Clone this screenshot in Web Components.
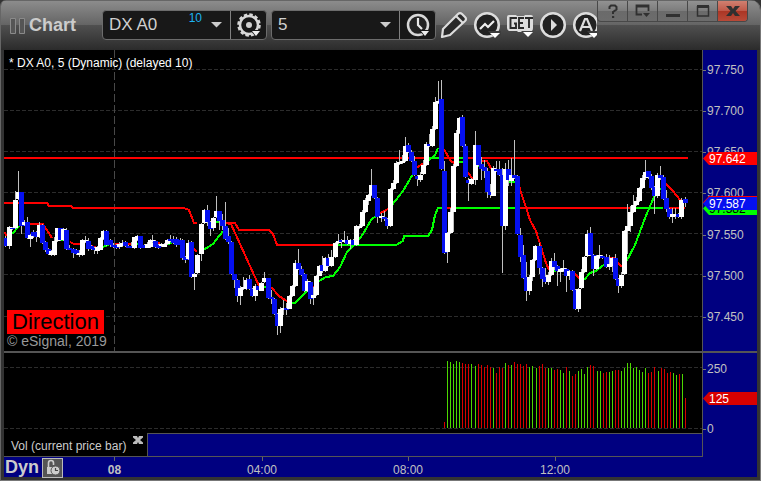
<!DOCTYPE html>
<html lang="en">
<head>
<meta charset="utf-8">
<title>Chart</title>
<style>
  html, body {
    height: 100%;
    margin: 0;
    background: #333;
  }
  body {
    font: 12px/15px "Liberation Sans", Arial, sans-serif;
    color: #c0c0c0;
  }
</style>
</head>
<body>
<chart-window>
  <tool-bar slot="toolbar"></tool-bar>
  <price-pane></price-pane>
  <volume-pane></volume-pane>
  <study-tabs></study-tabs>
  <time-axis></time-axis>
</chart-window>

<script>
class ChartWindow extends HTMLElement {
  constructor() {
    super();
    this.attachShadow({mode: 'open'}).innerHTML = `
      <style>
        :host {
          display: flex;
          flex-direction: column;
          box-sizing: border-box;
          height: 100vh;
          min-height: 320px;
          border-left: 1px solid #666;
          border-right: 1px solid #777;
          border-bottom: 1px solid #777;
          border-radius: 6px 10px 0 0;
          overflow: hidden;
          background: #333;
        }
        main {
          flex: 1;
          display: flex;
          flex-direction: column;
          min-height: 0;
          margin: 0 3px 3px;
          background: #000080;
        }
      </style>
      <slot name="toolbar"></slot>
      <main><slot></slot></main>
    `;
  }
}

class IconButton extends HTMLElement {
  constructor() {
    super();
    this.attachShadow({mode: 'open'}).innerHTML = `
      <style>
        :host { display: flex; flex: none; }
        button {
          display: flex;
          align-items: center;
          justify-content: center;
          width: 100%;
          padding: 0;
          border: 0;
          background: none;
          color: inherit;
        }
      </style>
      <button type="button" aria-label="${this.getAttribute('label')}"><slot></slot></button>
    `;
  }
}

class SymbolField extends HTMLElement {
  constructor() {
    super();
    this.attachShadow({mode: 'open'}).innerHTML = `
      <style>
        :host {
          display: flex;
          flex: none;
          box-sizing: border-box;
          width: 165px;
          height: 30px;
          border: 1px solid #6c6c6c;
          border-radius: 4px;
          background: #181818;
        }
        label {
          display: flex;
          align-items: center;
          flex: 1;
          min-width: 0;
          padding: 0 8px 0 6px;
          border-right: 1px solid #808080;
        }
        input, select {
          flex: 1;
          min-width: 0;
          height: 28px;
          padding: 0;
          border: 0;
          outline: 0;
          appearance: none;
          background: none;
          font: 17px/28px "Liberation Sans", Arial, sans-serif;
          color: #d0d0d0;
        }
        .count {
          align-self: flex-start;
          margin-right: 9px;
          color: #1cb2f0;
        }
        ::slotted(icon-button) { width: 35px; }
      </style>
      <label>
        ${this.hasAttribute('options')
          ? `<select aria-label="Interval"><option>${this.getAttribute('options')}</option></select>`
          : `<input aria-label="Symbol" value="${this.getAttribute('value')}"><span class="count">${this.getAttribute('count')}</span>`}
        <svg width="11" height="6"><path d="M0 0h11L5.500 5.500z" fill="#ccc"/></svg>
      </label>
      <slot></slot>
    `;
  }
}

class WindowControls extends HTMLElement {
  constructor() {
    super();
    this.attachShadow({mode: 'open'}).innerHTML = `
      <style>
        :host {
          display: flex;
          flex: none;
          align-self: flex-start;
          box-sizing: border-box;
          height: 21px;
          margin-right: 12px;
          border: 1px solid #484848;
          border-top: 0;
          border-radius: 0 0 4px 4px;
          overflow: hidden;
          background: linear-gradient(#929292, #7c7c7c 50%, #6a6a6a 50%, #6c6c6c);
        }
        icon-button {
          width: 29px;
          border-right: 1px solid #484848;
          color: #303030;
        }
        icon-button:last-child {
          border-right: 0;
          background: linear-gradient(#d08070, #bf5848 50%, #ab3524 50%, #b84a38);
        }
      </style>
      <icon-button label="Help"><svg width="10" height="14" fill="none" stroke="currentColor" stroke-width="2"><path d="M1.500 5V3L3 1.500h4L8.500 3v2.500L5 8v2M4 13h2.200"/></svg></icon-button>
      <icon-button label="Window menu"><svg width="16" height="14" fill="none" stroke="currentColor"><path d="M7 10.500H1.500v-9h12V7M1 2.500h13" stroke-width="1.800"/><path d="M8 9h7l-3.500 4z" fill="currentColor" stroke="none"/></svg></icon-button>
      <icon-button label="Minimize"><svg width="14" height="14"><path d="M0 10h14v3H0z" fill="currentColor"/></svg></icon-button>
      <icon-button label="Maximize"><svg width="14" height="14" fill="none" stroke="currentColor"><path d="M1.500 2v10h11V2" stroke-width="1.500"/><path d="M1 2.500h12" stroke-width="3"/></svg></icon-button>
      <icon-button label="Close"><svg width="14" height="12"><path d="M0 1h5l2 3 2-3h5L9.500 6l4.500 5H9L7 8l-2 3H0l4.500-5z" fill="currentColor"/></svg></icon-button>
    `;
  }
}

class ToolBar extends HTMLElement {
  constructor() {
    super();
    this.attachShadow({mode: 'open'}).innerHTML = `
      <style>
        :host {
          display: flex;
          flex: none;
          align-items: center;
          box-sizing: border-box;
          height: 50px;
          border-top: 1px solid #666;
          background: linear-gradient(#8c8c8c, #646464 49%, #505050 49%, #2b2b2b);
        }
        .grip { margin-left: 9px; }
        h1 {
          margin: 0 26px 2px 3px;
          font: bold 18px/24px "Liberation Sans", Arial, sans-serif;
          color: #ccc;
        }
        symbol-field {
          margin: 0 4px 1px 0;
        }
        .tools {
          display: flex;
          flex: 1;
          gap: 5px;
          min-width: 0;
          margin-bottom: 2px;
          overflow: hidden;
        }
        .tools icon-button { width: 28px; }
      </style>
      <svg class="grip" width="16" height="16" fill="#555" stroke="#8a8a8a"><path d="M.500.500h5v15h-5zM9.500.500h5v15h-5z"/></svg>
      <h1>Chart</h1>
      <symbol-field value="DX A0" count="10">
        <icon-button label="Settings"><svg width="26" height="26" viewBox="0 0 26 26">
          <circle cx="13" cy="13" r="9" fill="none" stroke="#d8d8d8" stroke-width="2.500"/>
          <circle cx="13" cy="13" r="10.500" fill="none" stroke="#d8d8d8" stroke-width="2.500" stroke-dasharray="3.400 2.098"/>
          <circle cx="13" cy="13" r="3" fill="#d0d0d0"/>
          <path d="M14 18h12l-6 7z" fill="#181818"/><path d="M16 19h8l-4 5z" fill="#eee"/></svg></icon-button>
      </symbol-field>
      <symbol-field options="5">
        <icon-button label="Time template"><svg width="26" height="26" viewBox="0 0 26 26">
          <circle cx="13" cy="13" r="10" fill="#222" stroke="#d8d8d8" stroke-width="2.500"/>
          <path d="M13 6v7l4 4" fill="none" stroke="#e8e8e8" stroke-width="2.200"/>
          <path d="M14 18h12l-6 7z" fill="#181818"/><path d="M16 19h8l-4 5z" fill="#eee"/></svg></icon-button>
      </symbol-field>
      <div class="tools">
        <icon-button label="Draw"><svg width="28" height="28" viewBox="0 0 28 28" fill="#292929" stroke="#ddd" stroke-width="2.200" stroke-linejoin="round">
          <path d="M2 26l1-8L18 3q2-2 4 0l3 3q2 2 0 4L10 24z"/><path d="M16 5l7 7" fill="none"/></svg></icon-button>
        <icon-button label="Studies"><svg width="28" height="28" viewBox="0 0 28 28">
          <circle cx="14" cy="14" r="11.800" fill="#222" stroke="#ddd" stroke-width="2.500"/>
          <path d="M7 18l5-5 3 3 6-6" fill="none" stroke="#eee" stroke-width="2.200"/>
          <path d="M15 20h13v4l-5 4z" fill="#3c3c3c"/><path d="M17 22h10l-5 5z" fill="#fff"/></svg></icon-button>
        <icon-button label="GET studies"><svg width="28" height="28" viewBox="0 0 28 28">
          <path d="M3 4h7l1 1h7l1-1h6q2 0 2 2v11q0 2-1 3h-7l-1 1h-6l-1-1H3q-2-1-2-3V6q0-2 2-2z" fill="#ddd"/>
          <path d="M10 8V7H4.500v10H10v-4.500H8M18 7h-5v10h5M13 12h4M19 7h8M23 7v10" fill="none" stroke="#292929" stroke-width="1.900"/>
          <path d="M15 20h13l-6 7z" fill="#444"/><path d="M17 21h10l-5 5z" fill="#fff"/></svg></icon-button>
        <icon-button label="Play"><svg width="28" height="28" viewBox="0 0 28 28">
          <circle cx="14" cy="14" r="11.800" fill="#222" stroke="#ddd" stroke-width="2.500"/><path d="M12 8l6 6-6 6z" fill="#ddd"/></svg></icon-button>
        <icon-button label="Alerts"><svg width="28" height="28" viewBox="0 0 28 28">
          <circle cx="14" cy="14" r="11.800" fill="#222" stroke="#ddd" stroke-width="2.500"/>
          <path d="M8 20l5-12h2l5 12M10 16h8" fill="none" stroke="#ddd" stroke-width="2.200"/>
          <path d="M15 20h13v4l-5 4z" fill="#3c3c3c"/><path d="M17 22h10l-5 5z" fill="#fff"/></svg></icon-button>
      </div>
      <window-controls></window-controls>
    `;
  }
}

/* right hand scale: evenly spread labels, tags slotted over them */
class ValueAxis extends HTMLElement {
  constructor() {
    super();
    const labels = this.getAttribute('labels').split(' ');
    this.attachShadow({mode: 'open'}).innerHTML = `
      <style>
        :host {
          display: flex;
          flex-direction: column;
          justify-content: space-between;
          flex: none;
          position: relative;
          box-sizing: border-box;
          width: 55px;
          border-left: 1px solid #555;
        }
        span {
          display: flex;
          align-items: center;
          gap: 1px;
          height: 15px;
        }
        span::before {
          content: "";
          width: 3px;
          height: 1px;
          background: #777;
        }
      </style>
      ${labels.map(l => `<span>${l}</span>`).join('')}
      <slot></slot>
    `;
  }
}

class AxisTag extends HTMLElement {
  constructor() {
    super();
    this.attachShadow({mode: 'open'}).innerHTML = `
      <style>
        :host {
          position: absolute;
          left: 0;
          right: 0;
          height: 13px;
          padding-left: 6px;
          line-height: 14px;
          color: #fff;
          clip-path: polygon(0 50%, 6px 0, 100% 0, 100% 100%, 6px 100%);
        }
      </style>
      <slot></slot>
    `;
  }
}

// x high top bottom low, w = up bar, b = down bar
const CANDLES = `
5 236 238 246 247 b|9 226 227 246 249 w|12 227 228 229 230 b|15 191 200 228 229 w|18 171 192 199 200 w|21 192 192 226 234 b|24 220 222 225 226 w|
27 217 222 238 239 b|30 234 235 239 247 w|33 230 232 236 238 b|36 231 232 237 242 b|39 222 225 237 238 w|42 224 225 243 244 b|45 241 242 250 252 b|
48 248 249 254 255 b|51 250 251 255 256 w|54 237 241 255 256 w|57 228 228 241 242 w|60 228 228 240 241 b|63 228 229 240 241 w|66 228 230 249 250 b|
69 245 248 250 250 b|73 248 249 253 258 b|76 249 250 254 255 b|79 250 253 255 257 w|82 239 240 255 256 w|85 236 240 242 243 w|88 238 241 249 251 b|
91 245 246 249 250 b|94 247 248 250 254 b|97 246 247 251 254 w|100 237 238 250 250 w|103 230 231 239 240 w|106 230 231 245 246 b|110 239 240 245 247 b|
113 243 245 247 248 b|116 244 245 248 249 b|119 242 244 247 249 w|122 240 243 246 247 w|125 241 242 246 247 b|128 245 246 248 248 b|131 242 246 248 248 b|
134 237 237 248 249 w|137 235 236 240 241 w|140 236 236 248 249 b|144 244 245 248 248 b|147 242 244 248 248 w|150 239 240 247 248 w|152 235 240 242 243 w|
155 240 241 247 248 b|158 244 245 248 249 b|161 243 244 246 247 w|164 243 244 247 247 w|167 239 240 244 245 w|170 235 239 241 242 b|173 236 239 243 244 b|
176 237 239 245 247 b|180 238 240 245 248 b|182 239 240 258 260 b|185 256 257 260 263 b|188 240 243 259 260 w|191 241 242 277 278 b|194 273 274 277 290 w|
197 254 255 273 274 w|201 223 224 254 261 w|204 209 210 223 224 w|207 205 210 222 226 b|210 221 222 229 236 b|213 217 218 228 231 w|216 196 211 217 218 w|
219 211 211 221 230 b|222 214 220 226 230 b|225 202 226 239 240 b|228 228 236 242 244 b|231 241 242 274 275 b|234 274 274 280 288 b|237 279 280 296 302 b|
240 286 288 296 305 w|243 277 287 289 290 w|246 278 280 289 290 w|249 275 279 289 290 b|252 288 289 296 297 b|255 284 286 296 301 w|258 286 286 290 290 b|
261 282 283 291 291 w|264 272 278 282 283 w|268 278 278 298 299 b|271 290 297 299 304 b|274 298 299 314 315 b|277 313 314 326 335 b|280 307 309 326 333 w|
283 300 308 310 315 w|286 303 308 310 315 b|289 295 296 309 309 w|292 285 286 296 297 w|295 260 263 286 287 w|298 249 263 269 270 b|301 266 269 275 276 b|
304 273 274 291 292 b|307 279 281 291 292 w|310 281 282 299 304 b|313 287 295 298 305 w|316 275 276 295 296 w|319 265 266 276 276 w|322 256 265 271 273 b|
325 257 258 271 272 w|328 254 258 266 267 b|331 250 257 266 267 w|335 242 243 257 258 w|338 234 241 243 244 w|341 239 240 242 248 b|344 231 240 242 243 w|
347 236 240 244 245 b|350 239 240 244 249 w|353 239 240 245 245 b|356 225 226 245 246 w|359 224 226 228 229 w|362 210 212 226 227 w|365 198 200 212 213 w|
368 194 195 201 205 w|371 169 185 195 196 w|374 185 185 198 199 b|377 197 198 217 223 b|381 213 216 218 222 w|384 211 217 219 221 b|387 218 219 226 229 b|
390 188 189 226 227 w|393 180 183 189 190 w|396 161 163 183 184 w|399 150 162 164 165 w|402 155 161 163 164 w|405 137 146 161 162 w|408 143 145 152 153 b|
411 150 152 161 162 b|414 156 161 175 176 b|417 175 176 179 186 b|420 172 175 180 182 w|423 160 165 174 175 w|426 142 144 165 166 w|429 134 144 146 147 b|
432 126 129 146 147 w|435 97 102 129 130 w|438 81 101 103 104 w|441 80 99 169 170 b|444 161 171 253 254 b|447 232 233 252 263 w|450 208 212 233 234 w|
453 164 166 212 232 w|456 130 133 166 167 w|459 117 118 133 134 w|462 115 117 146 147 b|465 144 146 177 178 b|468 178 180 183 201 b|471 178 179 184 185 w|
475 131 145 180 185 w|478 145 145 165 166 b|481 157 164 169 180 b|484 160 167 171 178 b|487 168 171 192 198 b|490 184 192 195 198 b|493 166 168 196 196 w|
496 161 169 171 172 b|499 161 169 175 176 b|502 168 175 226 273 b|505 163 169 226 230 w|508 160 169 180 186 b|511 158 175 181 186 w|514 140 175 178 179 b|
517 175 176 234 235 b|520 228 235 257 262 b|523 245 255 278 279 b|526 262 277 291 301 b|529 275 277 291 295 w|532 259 260 277 281 w|535 245 246 260 261 w|
539 243 246 268 274 b|542 267 268 279 287 b|545 268 277 282 284 b|548 272 275 282 285 w|551 258 261 275 276 w|554 253 261 267 270 b|557 265 266 271 286 b|
560 268 269 272 282 w|563 260 268 271 272 w|566 268 269 276 292 b|569 270 271 276 280 w|572 270 271 290 291 b|575 289 290 309 310 b|578 288 289 309 312 w|
581 269 272 288 289 w|584 256 257 272 273 w|587 230 234 256 257 w|590 227 233 255 256 b|593 254 255 269 276 b|596 255 256 269 270 w|599 245 255 258 259 w|
602 255 256 258 259 b|606 254 257 267 268 b|609 255 264 267 270 w|612 257 258 266 272 w|615 254 258 279 280 b|618 278 279 286 293 b|621 272 275 286 288 w|
624 230 231 274 275 w|627 204 226 231 254 w|630 206 212 226 232 w|633 195 205 212 213 w|636 197 201 205 206 w|639 187 188 201 202 w|642 175 178 188 189 w|
645 160 172 178 180 w|648 171 171 177 179 b|651 174 176 188 190 b|654 186 187 196 214 b|657 173 175 196 198 w|660 166 175 178 180 b|663 175 177 199 200 b|
666 190 198 209 212 b|669 208 209 217 219 b|672 208 214 217 223 w|675 208 214 216 219 w|678 213 214 217 218 b|681 198 200 217 219 w|685 197 199 203 207 b`;

const RED_LINES = [
  'M4 158H688',
  'M4 203H47L49 206H71L73 208H184L189 210L194 223H197',
  'M226 223H235L239 230H269L273 234L277 245H338',
  'M447 208H454M515 208H631M668 208H685',
  'M4 232L7 236M28 224H43L52 238M70 242L74 244H80M88 245L97 248M115 244H136M147 243H160M191 246L197 252',
  'M226 223L231 224L259 286M271 287L279 296L285 300L290 302M311 287H316M379 214L388 209M416 168L424 163',
  'M443 148L451 161L454 163M468 172L473 180M482 161L487 161L492 170M519 186L530 220L536 231L542 250L546 263L549 270',
  'M574 273L580 279M607 259L614 258L622 267M666 184L672 190L681 201'
];
const GREEN_LINES = [
  'M211 222H226M338 245H396L403 241L404 236H428L432 230L435 215L438 208H447M454 208H515M636 208H663',
  'M429 158H440M459 158H464',
  'M8 235L13 233L19 226M57 240H65M102 247L109 245M137 244H142M162 245L172 243',
  'M199 252L205 249L213 244L223 231M262 288L268 286M290 303H295L309 289',
  'M319 281L326 277L333 276L340 267L347 252L356 243L363 234L371 220L377 215',
  'M392 205L403 191L413 174M428 161L435 155L438 148M459 162H464M475 168L482 164M508 182H515',
  'M550 271H556M584 280L590 273L596 271L606 263M625 264L635 245L645 218L654 197L661 188'
];

function drawCandles() {
  return CANDLES.trim().split('|').map(row => {
    const [x, hi, top, bottom, low, dir] = row.trim().split(' ');
    return `<rect x="${x}" y="${hi}" width="1" height="${low - hi}" fill="#c0c0c0"/>` +
      `<rect x="${x - 2}" y="${top}" width="5" height="${bottom - top}" fill="${dir === 'w' ? '#fff' : '#0510f0'}"/>`;
  }).join('');
}

const paneStyle = `
  :host {
    display: flex;
    background: #000080;
  }
  .plot {
    position: relative;
    flex: 1;
    min-width: 0;
    background: #000;
  }
  .plot svg {
    position: absolute;
    width: 100%;
    height: 100%;
  }
  .grid {
    fill: none;
    stroke: #2c2c2c;
    stroke-dasharray: 4 2;
  }
`;

class PricePane extends HTMLElement {
  constructor() {
    super();
    this.attachShadow({mode: 'open'}).innerHTML = `
      <style>
        ${paneStyle}
        :host {
          flex: 1;
          min-height: 0;
          border-bottom: 2px solid #555;
        }
        .title {
          position: absolute;
          top: 6px;
          left: 5px;
          color: #fff;
        }
        .notes {
          position: absolute;
          left: 3px;
          bottom: 2px;
          font-size: 14px;
          color: #999;
        }
        .direction {
          display: block;
          width: 97px;
          background: #f00;
          color: #000;
          font-size: 22px;
          line-height: 24px;
          text-align: center;
        }
        value-axis { padding: 13px 0 26px; }
        .high { top: 102px; background: #f00; }
        .mid { top: 152px; background: #0f0; color: #000; }
        .back { top: 146px; background: #f00; }
        .last { top: 147px; background: #0510f0; }
      </style>
      <div class="plot">
        <svg viewBox="4 50 698 301" preserveAspectRatio="none" shape-rendering="crispEdges">
          <path class="grid" d="M4 69.500H702M4 110.500H702M4 151.500H702M4 192.500H702M4 233.500H702M4 274.500H702M4 316.500H702"/>
          <path d="M114.500 50V351" stroke="#484848" stroke-dasharray="8 3"/>
          <path d="${RED_LINES.join('')}" fill="none" stroke="#f00" stroke-width="2"/>
          <path d="${GREEN_LINES.join('')}" fill="none" stroke="#0f0" stroke-width="2"/>
          ${drawCandles()}
        </svg>
        <div class="title">* DX A0, 5 (Dynamic) (delayed 10)</div>
        <div class="notes"><span class="direction">Direction</span>© eSignal, 2019</div>
      </div>
      <value-axis labels="97.750 97.700 97.650 97.600 97.550 97.500 97.450">
        <axis-tag class="high">97.642</axis-tag>
        <axis-tag class="mid">97.582</axis-tag>
        <axis-tag class="back"></axis-tag>
        <axis-tag class="last">97.587</axis-tag>
      </value-axis>
    `;
  }
}

// bar height and colour, one per five minutes
const VOLUMES = `6r 67g 66g 64g 67g 66g 65r 64r 64r 64g 62g 64r 63r 61r 63r 61r 60g 55r 61r 60r 65g 63r 63g 66r 64r 64r 62r 64r 61g 62g
60g 62r 64r 60r 60g 60g 58r 59r 58g 55g 61r 57g 52r 54r 57g 59g 54g 61g 63r 62r 57g 57g 55r 56r 56g 57g 58r 58r 57g 60g
65g 65g 60g 61g 58g 56g 60g 55r 56r 61r 57g 60r 59r 55r 56r 55g 53g 54r 54g 30r`.split(/\s+/);

class VolumePane extends HTMLElement {
  constructor() {
    super();
    const step = 241 / (VOLUMES.length - 1);
    const bars = VOLUMES.map((v, i) => {
      const h = parseInt(v);
      return `<rect x="${444 + Math.round(i * step)}" y="${428 - h}" width="1" height="${h}" fill="${v.endsWith('g') ? '#4cd800' : '#d80000'}"/>`;
    });
    this.attachShadow({mode: 'open'}).innerHTML = `
      <style>
        ${paneStyle}
        :host {
          flex: none;
          height: 80px;
        }
        value-axis { padding: 9px 0 0; margin-bottom: -4px; }
        axis-tag { top: 39px; background: #d80000; }
      </style>
      <div class="plot">
        <svg viewBox="4 353 698 80" preserveAspectRatio="none" shape-rendering="crispEdges">
          <path class="grid" d="M4 367.500H702M4 428.500H702"/>
          ${bars.join('')}
        </svg>
      </div>
      <value-axis labels="250 0"><axis-tag>125</axis-tag></value-axis>
    `;
  }
}

class StudyTabs extends HTMLElement {
  constructor() {
    super();
    this.attachShadow({mode: 'open'}).innerHTML = `
      <style>
        :host {
          display: flex;
          flex: none;
          box-sizing: border-box;
          height: 24px;
          margin-right: 54px;
          border-right: 1px solid #555;
          border-bottom: 1px solid #555;
        }
        .tab {
          display: flex;
          gap: 7px;
          padding: 0 4px 0 7px;
          border-right: 1px solid #555;
          background: #000;
          color: #ccc;
        }
        .tab span { padding-top: 6px; }
        .tab icon-button { align-self: flex-start; padding-top: 3px; }
        .rest {
          flex: 1;
          border-top: 1px solid #555;
        }
      </style>
      <div class="tab">
        <span>Vol (current price bar)</span>
        <icon-button label="Close study"><svg width="10" height="8"><path d="M0 0h4l1 2 1-2h4v1.500L7 4l3 2.500V8H6L5 6 4 8H0V6.500L3 4 0 1.500z" fill="#bbb"/></svg></icon-button>
      </div>
      <div class="rest"></div>
    `;
  }
}

class TimeAxis extends HTMLElement {
  constructor() {
    super();
    this.attachShadow({mode: 'open'}).innerHTML = `
      <style>
        :host {
          display: grid;
          grid-template-columns: 60px 101fr 194fr 98fr 196fr 104fr;
          flex: none;
          height: 20px;
        }
        .mode {
          display: flex;
          align-items: center;
          gap: 3px;
          padding-left: 1px;
          font-size: 18px;
          font-weight: bold;
          color: #ccc;
        }
        .mode icon-button {
          box-sizing: border-box;
          width: 21px;
          height: 20px;
          border: 1px solid #bbb;
          background: #555;
        }
        .time {
          display: flex;
          flex-direction: column;
          align-items: center;
        }
        .time::before {
          content: "";
          width: 1px;
          height: 4px;
          margin-bottom: 2px;
          background: #666;
        }
        .day { font-weight: bold; }
      </style>
      <div class="mode">Dyn
        <icon-button label="Lock time template"><svg width="17" height="17" viewBox="0 0 17 17">
          <path d="M4.500 8V4q0-2.500 2.500-2.500T9.500 4v2" fill="none" stroke="#ccc" stroke-width="1.600"/>
          <path d="M3 8h8v7H3z" fill="#ccc"/>
          <circle cx="11.500" cy="11.500" r="4.500" fill="#ccc" stroke="#555"/>
          <path d="M11.500 9v2.500H14" fill="none" stroke="#444" stroke-width="1.200"/></svg></icon-button>
      </div>
      <div class="time day">08</div>
      <div class="time">04:00</div>
      <div class="time">08:00</div>
      <div class="time">12:00</div>
    `;
  }
}

customElements.define('icon-button', IconButton);
customElements.define('symbol-field', SymbolField);
customElements.define('window-controls', WindowControls);
customElements.define('tool-bar', ToolBar);
customElements.define('value-axis', ValueAxis);
customElements.define('axis-tag', AxisTag);
customElements.define('price-pane', PricePane);
customElements.define('volume-pane', VolumePane);
customElements.define('study-tabs', StudyTabs);
customElements.define('time-axis', TimeAxis);
customElements.define('chart-window', ChartWindow);
</script>
</body>
</html>
